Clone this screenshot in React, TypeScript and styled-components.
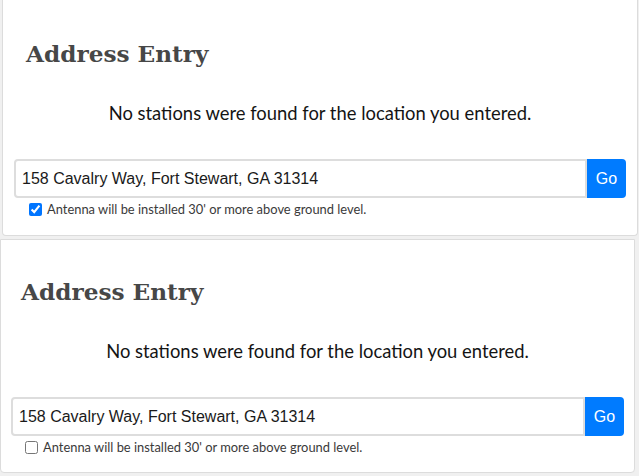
import styled, { createGlobalStyle } from 'styled-components';

const GlobalStyle = createGlobalStyle`
  html, body {
    margin: 0;
    padding: 0;
    background: #f0f0f0;
  }
  body {
    width: 639px;
    height: 476px;
    overflow: hidden;
  }
`;

interface CardProps {
  $left: number;
  $width: number;
  $height: number;
  $pad: number;
  $top: number;
  $topBorder?: boolean;
}

const Page = styled.div`
  display: flex;
  flex-direction: column;
  gap: 3px;
`;

const Card = styled.section<CardProps>`
  box-sizing: border-box;
  margin-left: ${(p) => p.$left}px;
  width: ${(p) => p.$width}px;
  height: ${(p) => p.$height}px;
  background: #ffffff;
  border: 1px solid #dcdcdc;
  border-top: ${(p) => (p.$topBorder ? '1px solid #dcdcdc' : 'none')};
  border-radius: 0 0 4px 4px;
  padding: ${(p) => p.$top}px ${(p) => p.$pad}px 0 ${(p) => p.$pad}px;
  display: flex;
  flex-direction: column;
`;

const Heading = styled.h2<{ $indent: number }>`
  margin: 0 0 0 ${(p) => p.$indent}px;
  font-family: "DejaVu Serif", "Liberation Serif", serif;
  font-weight: bold;
  font-size: 23.2px;
  line-height: 29px;
  color: #474747;
`;

const Message = styled.p`
  margin: 33px 0 0 0;
  font-family: Lato, "Open Sans", sans-serif;
  font-size: 18.4px;
  line-height: 24px;
  color: #141414;
  text-align: center;
`;

const SearchRow = styled.div`
  margin-top: 34px;
  display: flex;
  height: 39px;
`;

const AddressInput = styled.input`
  flex: 1;
  min-width: 0;
  box-sizing: border-box;
  height: 39px;
  border: 2px solid #dddddd;
  border-radius: 4px 0 0 4px;
  padding: 0 6px;
  font-family: "Liberation Sans", Arial, sans-serif;
  font-size: 16px;
  color: #1a1a1a;
  background: #ffffff;
  outline: none;
`;

const GoButton = styled.button`
  width: 39px;
  height: 39px;
  border: none;
  border-radius: 0 4px 4px 0;
  background: #007bff;
  color: #ffffff;
  font-family: "Liberation Sans", Arial, sans-serif;
  font-size: 16px;
  padding: 0;
  cursor: pointer;
`;

const CheckRow = styled.label<{ $indent: number }>`
  margin: 3px 0 0 ${(p) => p.$indent}px;
  display: flex;
  align-items: center;
  gap: 5px;
  font-family: Lato, "Open Sans", sans-serif;
  font-size: 12.9px;
  line-height: 17px;
  color: #3a3a3a;
`;

const Check = styled.input`
  width: 13px;
  height: 13px;
  margin: 0;
  accent-color: #0075ff;
`;

interface EntryProps {
  checked: boolean;
  card: CardProps;
  headingIndent: number;
  checkIndent: number;
}

const AddressEntry = ({ checked, card, headingIndent, checkIndent }: EntryProps) => (
  <Card {...card}>
    <Heading $indent={headingIndent}>Address Entry</Heading>
    <Message>No stations were found for the location you entered.</Message>
    <SearchRow>
      <AddressInput type="text" defaultValue="158 Cavalry Way, Fort Stewart, GA 31314" />
      <GoButton type="button">Go</GoButton>
    </SearchRow>
    <CheckRow $indent={checkIndent}>
      <Check type="checkbox" defaultChecked={checked} />
      Antenna will be installed 30' or more above ground level.
    </CheckRow>
  </Card>
);

export default function App() {
  return (
    <>
      <GlobalStyle />
      <Page>
        <AddressEntry
          checked
          card={{ $left: 2, $width: 636, $height: 236, $pad: 11, $top: 39 }}
          headingIndent={12}
          checkIndent={15}
        />
        <AddressEntry
          checked={false}
          card={{ $left: 0, $width: 635, $height: 234, $pad: 10, $top: 37, $topBorder: true }}
          headingIndent={10}
          checkIndent={14}
        />
      </Page>
    </>
  );
}
